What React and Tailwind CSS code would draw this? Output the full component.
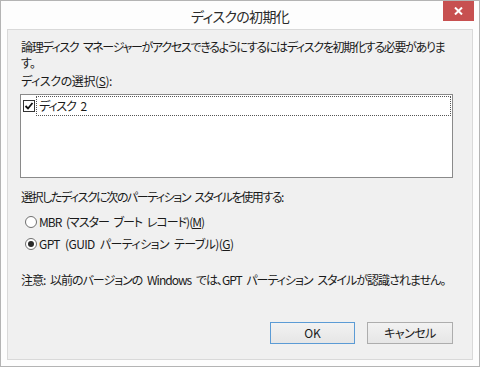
export default function App() {
  const font = { fontFamily: '"Noto Sans CJK JP", "Noto Sans", sans-serif' };
  return (
    <div
      className="w-[480px] h-[367px] border border-[#b4b4b4] bg-[#fdfdfd] flex flex-col text-[12px] leading-[16px] text-[#1a1a1a] [font-feature-settings:'palt'] overflow-hidden"
      style={font}
    >
      <div className="h-[28px] grid grid-cols-[1fr_auto_1fr] items-start">
        <div />
        <div className="pt-[6px] text-[14px] leading-[18px] tracking-[-0.7px] text-[#2a2a2a]">ディスクの初期化</div>
        <div className="flex justify-end pr-[5px]">
          <div className="w-[31px] h-[20px] bg-[#c75050] flex items-center justify-center">
            <svg width="9" height="8" viewBox="0 0 9 8">
              <path d="M1 0.5 L8 7.5 M8 0.5 L1 7.5" stroke="#fff" strokeWidth="2" />
            </svg>
          </div>
        </div>
      </div>
      <div className="flex-1 mx-[6px] mb-[6px] border border-[#d9d9d9] bg-[#f0f0f0] flex flex-col pl-[12px] pr-[19px] pt-[9px] tracking-[-0.9px] [word-spacing:3px]">
        <div className="pl-[1px] whitespace-nowrap tracking-[-1.3px]">
          論理ディスク マネージャーがアクセスできるようにするにはディスクを初期化する必要がありま
        </div>
        <div className="pl-[1px]">す。</div>
        <div className="pl-[1px] mt-[2px] tracking-[-0.4px]">
          ディスクの選択(<span className="underline">S</span>):
        </div>
        <div className="mt-[5px] h-[84px] w-[433px] border border-[#8a8a8a] bg-white flex flex-col pt-[1px] pl-[1px] pr-[1px]">
          <div className="flex items-center h-[20px]">
            <div className="w-[12px] flex justify-center ml-[1px] mr-[1px]">
              <svg width="12" height="12" viewBox="0 0 12 12">
                <rect x="0.5" y="0.5" width="11" height="11" fill="#fff" stroke="#333" />
                <path d="M2.5 6 L5 8.5 L9.5 3" fill="none" stroke="#111" strokeWidth="1.8" />
              </svg>
            </div>
            <div className="flex-1 h-[20px] border border-dotted border-[#555] flex items-center pl-[2px] tracking-[-1.1px]">
              ディスク 2
            </div>
          </div>
        </div>
        <div className="pl-[1px] mt-[11px] whitespace-nowrap tracking-[-1.45px]">
          選択したディスクに次のパーティション スタイルを使用する:
        </div>
        <div className="mt-[9px] flex items-center pl-[5px]">
          <svg width="12" height="12" viewBox="0 0 12 12">
            <circle cx="6" cy="6" r="5.5" fill="#fff" stroke="#6e6e6e" />
          </svg>
          <span className="ml-[2px] tracking-[-1.0px]">
            MBR (マスター ブート レコード)(<span className="underline">M</span>)
          </span>
        </div>
        <div className="mt-[6px] flex items-center pl-[5px]">
          <svg width="12" height="12" viewBox="0 0 12 12">
            <circle cx="6" cy="6" r="5.5" fill="#fff" stroke="#6e6e6e" />
            <circle cx="6" cy="6" r="3" fill="#2a2a2a" />
          </svg>
          <span className="ml-[2px] tracking-[-0.6px]">
            GPT (GUID パーティション テーブル)(<span className="underline">G</span>)
          </span>
        </div>
        <div className="pl-[1px] mt-[20px] whitespace-nowrap tracking-[-1.0px]">
          注意: 以前のバージョンの Windows では、GPT パーティション スタイルが認識されません。
        </div>
        <div className="mt-[34px] flex justify-end gap-[12px] pr-[0px] tracking-normal [word-spacing:0px]">
          <div className="w-[85px] h-[22px] border border-[#5b9bd5] bg-gradient-to-b from-[#f2f2f2] to-[#e6e6e6] flex items-center justify-center">
            OK
          </div>
          <div className="w-[86px] h-[22px] border border-[#adadad] bg-gradient-to-b from-[#f2f2f2] to-[#e6e6e6] flex items-center justify-center tracking-[-0.5px]">
            キャンセル
          </div>
        </div>
      </div>
    </div>
  );
}
